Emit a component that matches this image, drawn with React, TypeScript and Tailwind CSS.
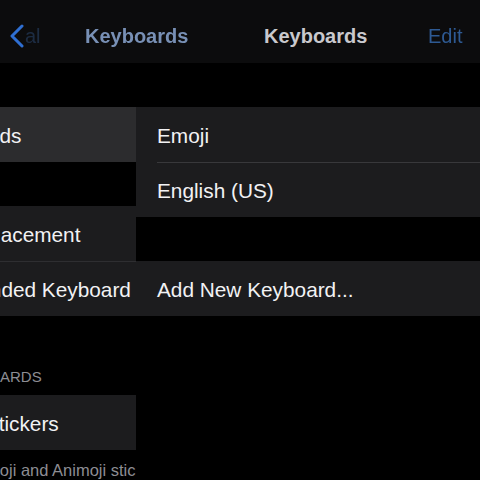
import React from "react";

const font = { fontFamily: '"Liberation Sans", Arial, sans-serif' };

interface CellProps
{
    text: string;
    shift?: string;
    active?: boolean;
    line?: boolean;
}

const LeftCell: React.FC<CellProps> = ({text, shift, active, line}) =>
{
    return(
        <div className={`h-[55px] flex items-center pt-[2px] overflow-hidden whitespace-nowrap text-[20.8px] text-[#f2f2f4] ${active ? "bg-[#2c2c2e]" : "bg-[#1c1c1e]"} ${line ? "border-t border-[#2e2e31]" : ""}`}>
            <span className={shift}>{text}</span>
        </div>
    );
};

const RightCell: React.FC<CellProps> = ({text, line}) =>
{
    return(
        <div className="bg-[#1c1c1e] pl-[21px]">
            <div className={`h-[55px] flex items-center pt-[2px] text-[20.8px] text-[#f2f2f4] ${line ? "border-t border-[#38383b]" : ""}`}>{text}</div>
        </div>
    );
};

export default function App()
{
    return(
        <div className="w-[480px] h-[480px] bg-black overflow-hidden flex flex-col" style={font}>
            <div className="h-[63px] bg-[#0c0c0d] flex items-center pt-[8px] shrink-0">
                <div className="w-[85px] flex items-center pl-[10px] gap-[1px]">
                    <svg width="14" height="24" viewBox="0 0 14 24">
                        <path d="M12 2 L2 12 L12 22" fill="none" stroke="#2f6fd2" strokeWidth="3" strokeLinecap="round" strokeLinejoin="round"/>
                    </svg>
                    <span className="text-[20px] text-[#2d4c78] opacity-50">al</span>
                </div>
                <span className="w-[179px] text-[20px] font-bold text-[#7890b5] blur-[0.7px]">Keyboards</span>
                <span className="w-[164px] text-[20px] font-bold text-[#c9c9cd]">Keyboards</span>
                <span className="text-[20px] text-[#2e5a93] blur-[0.4px]">Edit</span>
            </div>
            <div className="flex pt-[44px] flex-1">
                <div className="w-[136px] shrink-0 flex flex-col">
                    <LeftCell text="Keyboards" shift="-ml-[78px]" active/>
                    <div className="h-[44px]"/>
                    <LeftCell text="Text Replacement" shift="-ml-[86px]"/>
                    <LeftCell text="One-Handed Keyboard" shift="-ml-[83px]" line/>
                    <div className="h-[79px] flex items-end pb-[7px] overflow-hidden whitespace-nowrap">
                        <span className="-ml-[82px] text-[15px] text-[#8d8d93]">ALL KEYBOARDS</span>
                    </div>
                    <LeftCell text="Memoji Stickers" shift="-ml-[88px]"/>
                    <div className="overflow-hidden whitespace-nowrap pt-[8px]">
                        <span className="-ml-[80px] text-[16.5px] text-[#8d8d93]">Send Memoji and Animoji stickers from your emoji keyboard.</span>
                    </div>
                </div>
                <div className="flex-1 flex flex-col">
                    <RightCell text="Emoji"/>
                    <RightCell text="English (US)" line/>
                    <div className="h-[44px]"/>
                    <RightCell text="Add New Keyboard..."/>
                </div>
            </div>
        </div>
    );
}
